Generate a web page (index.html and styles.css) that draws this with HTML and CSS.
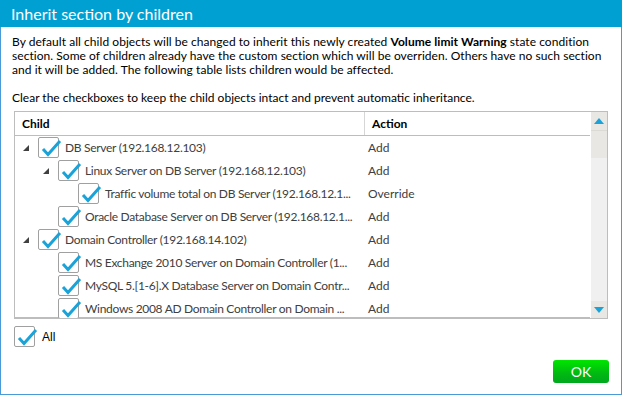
FILE: index.html
```html
<!DOCTYPE html>
<html>
<head>
<meta charset="utf-8">
<link rel="stylesheet" href="styles.css">
</head>
<body>
<div class="window">
  <div class="titlebar">Inherit section by children</div>
  <div class="content">
    <p class="intro">By default all child objects will be changed to inherit this newly created <b>Volume limit Warning</b> state condition<br>section. Some of children already have the custom section which will be overriden. Others have no such section<br>and it will be added. The following table lists children would be affected.</p>
    <p class="hint">Clear the checkboxes to keep the child objects intact and prevent automatic inheritance.</p>
    <div class="table">
      <div class="grid">
        <div class="head">
          <div class="hcell child-col">Child</div>
          <div class="hcell action-col">Action</div>
        </div>
        <div class="row lvl0">
          <div class="cell child-col"><span class="exp"><svg width="6" height="6" viewBox="0 0 6 6"><polygon points="6,0 6,6 0,6" fill="#404040"/></svg></span><span class="cb"><svg width="24" height="20" viewBox="0 0 24 20"><path d="M5 10 L10 15.5 L22 2" fill="none" stroke="#1aa3d9" stroke-width="3"/></svg></span><span class="label">DB Server (192.168.12.103)</span></div>
          <div class="cell action-col">Add</div>
        </div>
        <div class="row lvl1">
          <div class="cell child-col"><span class="exp"><svg width="6" height="6" viewBox="0 0 6 6"><polygon points="6,0 6,6 0,6" fill="#404040"/></svg></span><span class="cb"><svg width="24" height="20" viewBox="0 0 24 20"><path d="M5 10 L10 15.5 L22 2" fill="none" stroke="#1aa3d9" stroke-width="3"/></svg></span><span class="label">Linux Server on DB Server (192.168.12.103)</span></div>
          <div class="cell action-col">Add</div>
        </div>
        <div class="row lvl2">
          <div class="cell child-col"><span class="exp"></span><span class="cb"><svg width="24" height="20" viewBox="0 0 24 20"><path d="M5 10 L10 15.5 L22 2" fill="none" stroke="#1aa3d9" stroke-width="3"/></svg></span><span class="label">Traffic volume total on DB Server (192.168.12.1...</span></div>
          <div class="cell action-col">Override</div>
        </div>
        <div class="row lvl1">
          <div class="cell child-col"><span class="exp"></span><span class="cb"><svg width="24" height="20" viewBox="0 0 24 20"><path d="M5 10 L10 15.5 L22 2" fill="none" stroke="#1aa3d9" stroke-width="3"/></svg></span><span class="label">Oracle Database Server on DB Server (192.168.12.1...</span></div>
          <div class="cell action-col">Add</div>
        </div>
        <div class="row lvl0">
          <div class="cell child-col"><span class="exp"><svg width="6" height="6" viewBox="0 0 6 6"><polygon points="6,0 6,6 0,6" fill="#404040"/></svg></span><span class="cb"><svg width="24" height="20" viewBox="0 0 24 20"><path d="M5 10 L10 15.5 L22 2" fill="none" stroke="#1aa3d9" stroke-width="3"/></svg></span><span class="label">Domain Controller (192.168.14.102)</span></div>
          <div class="cell action-col">Add</div>
        </div>
        <div class="row lvl1">
          <div class="cell child-col"><span class="exp"></span><span class="cb"><svg width="24" height="20" viewBox="0 0 24 20"><path d="M5 10 L10 15.5 L22 2" fill="none" stroke="#1aa3d9" stroke-width="3"/></svg></span><span class="label">MS Exchange 2010 Server on Domain Controller (1...</span></div>
          <div class="cell action-col">Add</div>
        </div>
        <div class="row lvl1">
          <div class="cell child-col"><span class="exp"></span><span class="cb"><svg width="24" height="20" viewBox="0 0 24 20"><path d="M5 10 L10 15.5 L22 2" fill="none" stroke="#1aa3d9" stroke-width="3"/></svg></span><span class="label">MySQL 5.[1-6].X Database Server on Domain Contr...</span></div>
          <div class="cell action-col">Add</div>
        </div>
        <div class="row lvl1">
          <div class="cell child-col"><span class="exp"></span><span class="cb"><svg width="24" height="20" viewBox="0 0 24 20"><path d="M5 10 L10 15.5 L22 2" fill="none" stroke="#1aa3d9" stroke-width="3"/></svg></span><span class="label">Windows 2008 AD Domain Controller on Domain ...</span></div>
          <div class="cell action-col">Add</div>
        </div>
      </div>
      <div class="scrollbar">
        <div class="sb-btn"><svg width="10" height="6" viewBox="0 0 10 6"><polygon points="5,0 10,6 0,6" fill="#1aa3d9"/></svg></div>
        <div class="sb-thumb"></div>
        <div class="sb-track"></div>
        <div class="sb-btn down"><svg width="10" height="6" viewBox="0 0 10 6"><polygon points="0,0 10,0 5,6" fill="#1aa3d9"/></svg></div>
      </div>
    </div>
    <div class="all">
      <span class="cb"><svg width="24" height="20" viewBox="0 0 24 20"><path d="M5 10 L10 15.5 L22 2" fill="none" stroke="#1aa3d9" stroke-width="3"/></svg></span>
      <span class="all-label">All</span>
    </div>
    <div class="footer">
      <button class="ok">OK</button>
    </div>
  </div>
</div>
</body>
</html>
```

FILE: styles.css
```css
* { box-sizing: border-box; }
html, body { margin: 0; padding: 0; }
body {
  width: 622px;
  height: 395px;
  overflow: hidden;
  background: #fff;
  font-family: "Lato", "Noto Sans", sans-serif;
}
.window {
  width: 622px;
  height: 395px;
  border: 1px solid #4a9ad8;
  border-top: none;
  display: flex;
  flex-direction: column;
}
.titlebar {
  height: 27px;
  background: #00a1d2;
  color: #fff;
  font-size: 16px;
  line-height: 27px;
  padding-left: 11px;
  margin: 0 -1px;
}
.content {
  flex: 1;
  padding: 0 13px 0 13px;
  display: flex;
  flex-direction: column;
}
.intro {
  margin: 8px 0 0 -2px;
  font-size: 12px;
  line-height: 14px;
  color: #000;
  white-space: nowrap;
  letter-spacing: 0.05px;
}
.intro b { font-weight: bold; }
.hint {
  margin: 14px 0 0 -2px;
  font-size: 12px;
  line-height: 14px;
  color: #000;
  white-space: nowrap;
}
.table {
  margin-top: 6px;
  height: 208px;
  border: 1px solid #bdbdbd;
  display: flex;
  overflow: hidden;
}
.grid {
  flex: 1;
  display: flex;
  flex-direction: column;
  border-bottom: 1px solid #bdbdbd;
  min-width: 0;
}
.head {
  display: flex;
  height: 24px;
  border-bottom: 1px solid #bdbdbd;
  flex-shrink: 0;
}
.hcell {
  font-size: 12px;
  font-weight: bold;
  color: #000;
  line-height: 24px;
}
.child-col { width: 350px; flex-shrink: 0; }
.action-col { flex: 1; }
.head .child-col { padding-left: 7px; border-right: 1px solid #d6d6d6; }
.head .action-col { padding-left: 7px; }
.row {
  display: flex;
  height: 23px;
  flex-shrink: 0;
  align-items: center;
}
.cell {
  font-size: 12px;
  color: #404040;
  display: flex;
  align-items: center;
  white-space: nowrap;
  overflow: hidden;
}
.child-col .label { letter-spacing: -0.3px; }
.row .action-col { padding-left: 3px; }
.row .child-col { padding-left: 7px; }
.lvl1 .child-col { padding-left: 27px; }
.lvl2 .child-col { padding-left: 47px; }
.exp {
  width: 16px;
  height: 6px;
  display: flex;
  align-items: flex-end;
  padding-left: 1px;
  flex-shrink: 0;
}
.exp svg { display: block; }
.cb {
  position: relative;
  width: 21px;
  height: 21px;
  border: 1px solid #a0a0a0;
  border-radius: 2px;
  background: #fff;
  flex-shrink: 0;
}
.cb svg {
  position: absolute;
  left: -1px;
  top: 1px;
}
.label { margin-left: 6px; }
.scrollbar {
  width: 17px;
  display: flex;
  flex-direction: column;
  background: #f0f0f0;
  border-left: 1px solid #ffffff;
}
.sb-btn {
  height: 18px;
  background: #e9e7e3;
  display: flex;
  align-items: center;
  justify-content: center;
}
.sb-btn.down { height: 17px; }
.sb-thumb {
  height: 28px;
  background: #e9e7e3;
  border-top: 1px solid #dcdad5;
}
.sb-track { flex: 1; }
.all {
  margin-top: 7px;
  display: flex;
  align-items: center;
  height: 21px;
}
.all-label {
  margin-left: 7px;
  font-family: "Liberation Sans", Arial, sans-serif;
  font-size: 12px;
  color: #000;
}
.footer {
  display: flex;
  justify-content: flex-end;
  margin-top: 13px;
}
.ok {
  width: 56px;
  height: 23px;
  border: none;
  border-radius: 3px;
  background: linear-gradient(#00e600, #00b812 60%, #00a81e);
  color: #fff;
  font-family: "Lato", "Noto Sans", sans-serif;
  font-size: 14px;
  padding: 0;
  margin-right: -1px;
}
```
